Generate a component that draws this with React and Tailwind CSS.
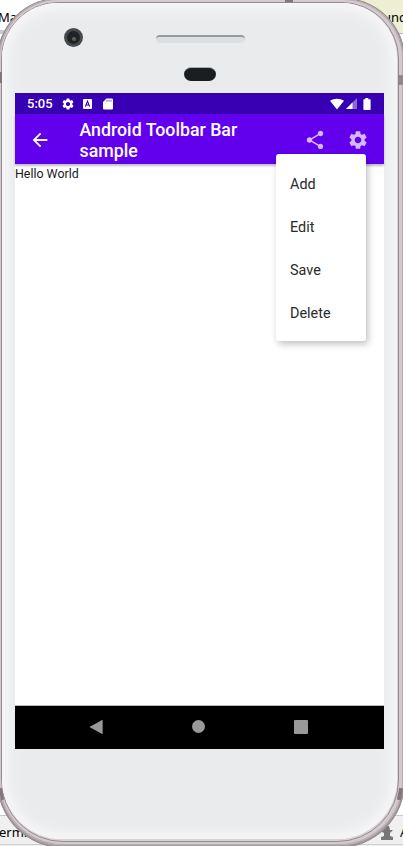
import React from "react";

const GEAR =
  "M19.14 12.94c.04-.3.06-.61.06-.94 0-.32-.02-.64-.07-.94l2.03-1.58c.18-.14.23-.41.12-.61l-1.92-3.32c-.12-.22-.37-.29-.59-.22l-2.39.96c-.5-.38-1.03-.7-1.62-.94l-.36-2.54c-.04-.24-.24-.41-.48-.41h-3.84c-.24 0-.43.17-.47.41l-.36 2.54c-.59.24-1.13.57-1.62.94l-2.39-.96c-.22-.08-.47 0-.59.22L2.74 8.87c-.12.21-.08.47.12.61l2.03 1.58c-.05.3-.09.63-.09.94s.02.64.07.94l-2.03 1.58c-.18.14-.23.41-.12.61l1.92 3.32c.12.22.37.29.59.22l2.39-.96c.5.38 1.03.7 1.62.94l.36 2.54c.05.24.24.41.48.41h3.84c.24 0 .44-.17.47-.41l.36-2.54c.59-.24 1.13-.56 1.62-.94l2.39.96c.22.08.47 0 .59-.22l1.92-3.32c.12-.22.07-.47-.12-.61l-2.01-1.58zM12 15.6c-1.98 0-3.6-1.62-3.6-3.6s1.62-3.6 3.6-3.6 3.6 1.62 3.6 3.6-1.62 3.6-3.6 3.6z";

function Icon({ d, className }) {
  return (
    <svg viewBox="0 0 24 24" fill="currentColor" className={className}>
      <path d={d} />
    </svg>
  );
}

function StatusBar() {
  return (
    <div className="flex h-[21px] items-center bg-[#3700b3] pl-3 pr-3 text-white">
      <span className="w-[35px] text-[13px] font-medium leading-none">5:05</span>
      <Icon d={GEAR} className="-ml-px size-[14px]" />
      <svg viewBox="0 0 9 10" className="ml-[8px] h-[10px] w-[9px]">
        <rect width="9" height="10" rx="1" fill="#fff" />
        <path d="M2.3 7.6 4.5 2.2 6.7 7.6M3.2 6h2.6" fill="none" stroke="#3700b3" strokeWidth="1.1" />
      </svg>
      <svg viewBox="0 0 10 12" className="ml-[11px] h-[12px] w-[10px]">
        <path d="M3.5.5H9a1 1 0 0 1 1 1v9a1 1 0 0 1-1 1H1a1 1 0 0 1-1-1V4z" fill="#fff" />
        <path d="M4 1.8v1.8M6 1.8v1.8M8 1.8v1.8" stroke="#3700b3" strokeWidth=".7" />
      </svg>
      <svg viewBox="0 0 14 12" className="ml-auto h-[12px] w-[14px]">
        <path d="M0 2.8C4 .1 10 .1 14 2.8L7 11.5z" fill="#fff" />
      </svg>
      <svg viewBox="0 0 11 11" className="ml-[2px] h-[11px] w-[11px]">
        <path d="M11 0v11H0z" fill="#8a6bd1" />
        <path d="M6.5 4.5V11H0z" fill="#fff" />
      </svg>
      <svg viewBox="0 0 8 12" className="ml-[6px] mr-[1px] h-[12px] w-[8px]">
        <path d="M2.3 0h3v1.2H7a.6.6 0 0 1 .6.6v9.5a.6.6 0 0 1-.6.6H1a.6.6 0 0 1-.6-.6V1.8a.6.6 0 0 1 .6-.6h1.3z" fill="#fff" />
      </svg>
    </div>
  );
}

function Toolbar() {
  return (
    <div className="relative flex h-[50px] items-center bg-[#6200ee] pl-[14px] pr-[15px] text-white shadow-[0_2px_2px_rgba(0,0,0,0.25)]">
      <Icon d="M20 11H7.83l5.59-5.59L12 4l-8 8 8 8 1.41-1.41L7.83 13H20v-2z" className="mt-[1px] size-[22px]" />
      <h1 className="ml-[28.5px] mt-[4px] w-[180px] text-[17.75px] font-medium leading-[21px]">
        Android Toolbar Bar sample
      </h1>
      <Icon
        d="M18 16.08c-.76 0-1.44.3-1.96.77L8.91 12.7c.05-.23.09-.46.09-.7s-.04-.47-.09-.7l7.05-4.11c.54.5 1.25.81 2.04.81 1.66 0 3-1.34 3-3s-1.34-3-3-3-3 1.34-3 3c0 .24.04.47.09.7L8.04 9.81C7.5 9.31 6.79 9 6 9c-1.66 0-3 1.34-3 3s1.34 3 3 3c.79 0 1.5-.31 2.04-.81l7.12 4.16c-.05.21-.08.43-.08.65 0 1.61 1.31 2.92 2.92 2.92s2.92-1.31 2.92-2.92-1.31-2.92-2.92-2.92z"
        className="ml-auto mt-[1px] size-[22px] text-[#d6b9fa]"
      />
      <Icon d={GEAR} className="ml-[21px] mt-[1px] size-[22px] text-[#d6b9fa]" />
      <ul className="absolute left-[260.5px] top-[40.3px] flex h-[186.5px] w-[90.5px] flex-col rounded-[3px] bg-white pt-[8.7px] text-[14.4px] text-[#2a2a2a] shadow-[2px_3px_7px_rgba(0,0,0,0.25)]">
        {["Add", "Edit", "Save", "Delete"].map((item) => (
          <li key={item} className="flex h-[43px] items-center pl-[14.5px]">
            {item}
          </li>
        ))}
      </ul>
    </div>
  );
}

function NavBar() {
  return (
    <div className="flex h-[44px] items-center border-t border-[#b8bcbc] bg-black pb-[2px] text-[#999]">
      <svg viewBox="0 0 14 16" className="ml-[74px] h-4 w-[14px]">
        <path d="M13.6.8v14.4L.4 8z" fill="currentColor" />
      </svg>
      <span className="ml-[89px] size-[13px] rounded-full bg-[#999]" />
      <span className="ml-[89px] size-[14px] rounded-[1px] bg-[#999]" />
    </div>
  );
}

function Desktop() {
  return (
    <div className="absolute inset-0 flex flex-col justify-between bg-white font-['Noto_Sans',sans-serif] text-[13px] text-black">
      <div className="flex h-[100px] justify-between">
        <div className="h-[34px] w-[50px] border-b-4 border-[#c3cbd5] pt-[8px]">
          <span className="-ml-[2px]">Ma</span>
        </div>
        <div className="h-[34px] w-[60px] border-b border-[#b8b8a8] bg-[#eeeed3] pt-[8px] text-right">
          <span className="-mr-[4px]">und</span>
        </div>
      </div>
      <div className="flex h-[31px] justify-between border-t border-[#c8c8c8] bg-[#f0f0f0]">
        <div className="h-[29px] w-[70px] border-b border-[#cfcfcf] pt-[7px]">
          <span className="-ml-[1px]">erm.</span>
        </div>
        <div className="flex h-[29px] w-[70px] border-b border-[#cfcfcf] pl-[47px] pt-[7px]">
          <svg viewBox="0 0 14 14" className="mt-[3px] h-[14px] w-[14px] shrink-0">
            <path d="M4 0h5l1 4h3L10 7v3l3 1v3H1v-3l3-1V7L0 5l4-1z" fill="#777" />
          </svg>
          <span className="ml-[6px]">A</span>
        </div>
      </div>
    </div>
  );
}

export default function App() {
  return (
    <div className="relative h-[846px] w-[403px] overflow-hidden font-[Roboto,sans-serif]">
      <Desktop />
      <div className="relative -ml-[3px] flex h-[846px] w-[408px] flex-col">
        <div className="-mb-[2px] -mt-[2px] flex h-[850px] flex-col rounded-b-[67px] rounded-t-[62px] bg-[#a79da1] pb-[3px] pl-[2px] pr-[2px] pt-[1px] shadow-[inset_0_0_1px_1px_#958b8f]">
          <div className="flex grow flex-col rounded-b-[64px] rounded-t-[60px] bg-[#d2cacd] pb-[3px] pl-[2px] pr-[4px] pt-[3px] shadow-[inset_0_0_0_1px_#b5acb0]">
            <div className="flex grow flex-col rounded-b-[62px] rounded-t-[57px] border border-[#958c90] bg-[#d8d2d5] pb-[2px] pr-[1px]">
              <div className="flex grow flex-col rounded-b-[60px] rounded-t-[56px] bg-[#eaebed] pl-[13px] pr-[12px] shadow-[inset_0_0_12px_7px_#f6f6f8]">
                <div className="relative flex h-[90px] flex-col items-center">
                  <span className="absolute left-[49px] top-[25px] flex size-[19px] items-center justify-center rounded-full bg-[#484b4e]">
                    <span className="flex size-[13px] items-center justify-center rounded-full bg-[#202328]">
                      <span className="mt-[3px] size-[4px] rounded-full bg-[#66613f]" />
                    </span>
                  </span>
                  <span className="mt-[32px] h-[8px] w-[89px] rounded-full border-t-2 border-[#929aa2] bg-[#dddfe1]" />
                  <span className="mt-[24px] h-[14px] w-[32px] rounded-full border-t border-[#aaaeb0] bg-[#1b1e20]" />
                </div>
                <main className="flex h-[656px] w-[369px] flex-col bg-white">
                  <StatusBar />
                  <Toolbar />
                  <p className="grow pt-[1px] text-[12.4px] leading-[18px] text-[#1b1b1b]">Hello World</p>
                  <NavBar />
                </main>
              </div>
            </div>
          </div>
        </div>
        <span className="absolute left-[288px] top-0 h-[2px] w-[8px] bg-[#81777b]" />
        <span className="absolute left-[3px] top-[72px] h-[11px] w-[2px] bg-[#81777b]" />
        <span className="absolute left-[401px] top-[75px] h-[10px] w-[5px] bg-[#91888c]" />
        <span className="absolute left-[3px] top-[788px] h-[12px] w-[3px] -rotate-12 bg-[#81777b]" />
        <span className="absolute left-[401px] top-[788px] h-[12px] w-[4px] rotate-12 bg-[#81777b]" />
      </div>
    </div>
  );
}
